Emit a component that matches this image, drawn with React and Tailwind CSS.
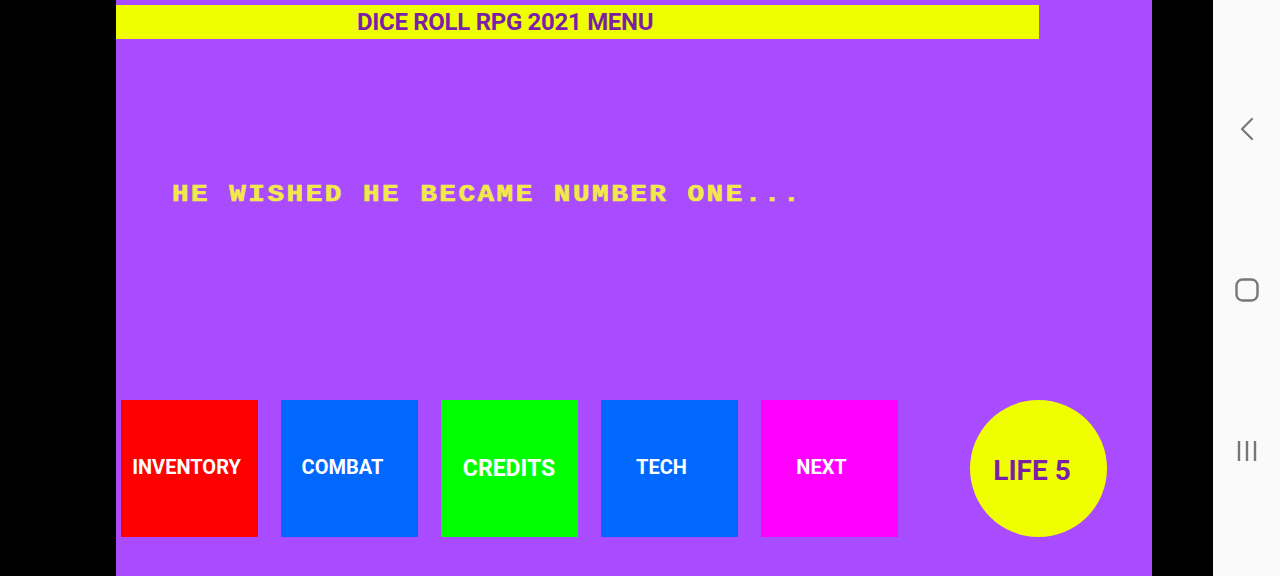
const buttons = [
  { label: 'INVENTORY', bg: 'bg-[#ff0000]', text: 'text-[20px] pr-[6px] pb-[4px]' },
  { label: 'COMBAT', bg: 'bg-[#0068ff]', text: 'text-[20px] pr-[14px] pb-[4px]' },
  { label: 'CREDITS', bg: 'bg-[#00ff00]', text: 'text-[23px] pr-[1px]' },
  { label: 'TECH', bg: 'bg-[#0068ff]', text: 'text-[20px] pr-[16px] pb-[4px]' },
  { label: 'NEXT', bg: 'bg-[#ff00ff]', text: 'text-[20px] pr-[16px] pb-[4px]' },
];

function NavBar() {
  return (
    <div className="w-[67px] h-full bg-[#fafafa] flex flex-col items-center pt-[48px]">
      <div className="h-[161px] flex items-center justify-center">
        <svg width="16" height="24" viewBox="0 0 16 24" fill="none" stroke="#777" strokeWidth="2.2" strokeLinecap="round" strokeLinejoin="round">
          <path d="M13 2 L3 12 L13 22" />
        </svg>
      </div>
      <div className="h-[161px] flex items-center justify-center">
        <svg width="24" height="24" viewBox="0 0 24 24" fill="none" stroke="#777" strokeWidth="2.4">
          <rect x="1.5" y="1.5" width="21" height="21" rx="6" />
        </svg>
      </div>
      <div className="h-[161px] flex items-center justify-center">
        <svg width="22" height="22" viewBox="0 0 22 22" fill="none" stroke="#777" strokeWidth="2.4">
          <path d="M3 1 V21 M11 1 V21 M19 1 V21" />
        </svg>
      </div>
    </div>
  );
}

export default function App() {
  return (
    <div className="w-[1280px] h-[576px] flex bg-black overflow-hidden" style={{ fontFamily: 'Roboto, "Liberation Sans", sans-serif' }}>
      <div className="w-[116px] h-full bg-black" />

      <div className="w-[1036px] h-full bg-[#a94bff] flex flex-col">
        <div className="mt-[5px] w-[923px] h-[34px] bg-[#f0ff00] flex items-center pl-[241px]">
          <span className="text-[24px] font-bold text-[#7b1fa6] leading-none tracking-[-0.3px]">
            DICE ROLL RPG 2021 MENU
          </span>
        </div>

        <div className="mt-[144px] pl-[56px]">
          <div
            className="origin-left scale-x-[1.15] text-[24px] leading-[24px] font-bold text-[#f2e84a] tracking-[2.2px] whitespace-nowrap [-webkit-text-stroke:0.7px_#f2e84a]"
            style={{ fontFamily: '"Liberation Mono", "DejaVu Sans Mono", monospace' }}
          >
            HE WISHED HE BECAME NUMBER ONE...
          </div>
        </div>

        <div className="mt-[193px] pl-[5px] flex items-center gap-[23px]">
          {buttons.map((b) => (
            <div key={b.label} className={`w-[137px] h-[137px] ${b.bg} flex items-center justify-center`}>
              <span className={`font-bold text-white leading-none ${b.text}`}>{b.label}</span>
            </div>
          ))}
          <div className="ml-[49px] w-[137px] h-[137px] rounded-full bg-[#f0ff00] flex items-center justify-center">
            <span className="text-[28px] font-bold text-[#7b1fa6] leading-none pr-[13px] pt-[4px]">LIFE 5</span>
          </div>
        </div>
      </div>

      <div className="w-[61px] h-full bg-black" />
      <NavBar />
    </div>
  );
}
